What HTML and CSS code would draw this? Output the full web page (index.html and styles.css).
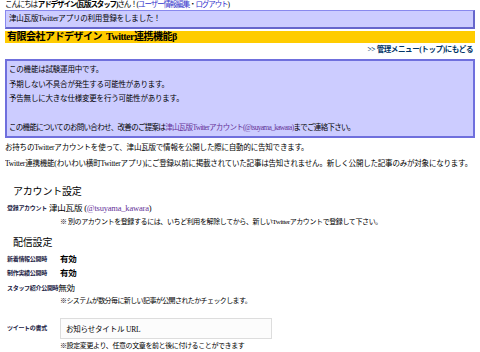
FILE: index.html
```html
<!DOCTYPE html>
<html lang="ja">
<head>
  <meta charset="UTF-8" />
  <title>Twitter連携機能</title>
  <link rel="stylesheet" href="styles.css">
</head>
<body>
  <div class="greeting">
    こんにちは <b>アドデザイン(瓦版スタッフ)</b>さん！(<a href="#">ユーザー情報編集</a>・<a href="#">ログアウト</a>)
  </div>

  <div class="flash">津山瓦版Twitterアプリの利用登録をしました！</div>

  <h1 class="title-bar">有限会社アドデザイン&nbsp; Twitter連携機能β</h1>

  <div class="back-link"><a href="#">&gt;&gt; 管理メニュー(トップ)にもどる</a></div>

  <!-- お知らせ -->
  <div class="notice">
    <p>この機能は試験運用中です。</p>
    <p>予期しない不具合が発生する可能性があります。</p>
    <p>予告無しに大きな仕様変更を行う可能性があります。</p>
    <p>&nbsp;</p>
    <p class="tight">この機能についてのお問い合わせ、改善のご提案は<a href="#" class="visited">津山瓦版Twitterアカウント(@tsuyama_kawara)</a>までご連絡下さい。</p>
  </div>

  <div class="intro">
    <p>お持ちのTwitterアカウントを使って、津山瓦版で情報を公開した際に自動的に告知できます。</p>
    <p>Twitter連携機能(わいわい横町Twitterアプリ)にご登録以前に掲載されていた記事は告知されません。新しく公開した記事のみが対象になります。</p>
  </div>

  <!-- アカウント設定 -->
  <h2>アカウント設定</h2>
  <div class="row">
    <span class="label account">登録アカウント</span>
    <span class="value">津山瓦版 (<a href="#" class="visited">@tsuyama_kawara</a>)</span>
  </div>
  <p class="note">※ 別のアカウントを登録するには、いちど利用を解除してから、新しいTwitterアカウントで登録して下さい。</p>

  <!-- 配信設定 -->
  <h2>配信設定</h2>
  <div class="row">
    <span class="label wide">新着情報公開時</span>
    <span class="value strong">有効</span>
  </div>
  <div class="row">
    <span class="label wide">制作実績公開時</span>
    <span class="value strong">有効</span>
  </div>
  <div class="row">
    <span class="label">スタッフ紹介公開時</span>
    <span class="value">無効</span>
  </div>
  <p class="note short">※システムが数分毎に新しい記事が公開されたかチェックします。</p>

  <div class="row format-row">
    <span class="label format">ツイートの書式</span>
    <input type="text" class="format-input" value="お知らせタイトル URL" />
  </div>
  <p class="note">※設定変更より、任意の文章を前と後に付けることができます</p>
</body>
</html>
```

FILE: styles.css
```css
body {
  font-family: 'Liberation Serif', 'Noto Sans CJK JP', sans-serif;
  font-size: 7.5px;
  letter-spacing: -0.2px;
  color: #000;
  background: #fff;
  margin: 0 5px;
}

a {
  color: #3333cc;
  text-decoration: none;
}

a.visited {
  color: #663399;
}

p {
  margin: 0;
}

.greeting {
  line-height: 10px;
  height: 10px;
  letter-spacing: -1.1px;
}

.flash {
  background: #ccccff;
  border: 1px solid #8888ee;
  border-right: 2px solid #6666cc;
  border-bottom: 2px solid #6666cc;
  padding: 3px 3px;
  line-height: 10px;
}

.title-bar {
  background: #ffcc00;
  font-size: 10px;
  letter-spacing: -0.5px;
  line-height: 12px;
  margin: 2px 0 0;
  padding: 0 2px;
}

.back-link {
  text-align: right;
  font-weight: bold;
  letter-spacing: -0.4px;
  line-height: 13px;
  padding-right: 2px;
}

.back-link a {
  color: #003366;
}

.notice {
  background: #ccccff;
  border: 2px solid #6f6fdd;
  padding: 2px 2px 0;
  margin-top: 3px;
  line-height: 14.5px;
}

.notice .tight {
  letter-spacing: -0.7px;
}

.intro {
  margin-top: 2px;
  line-height: 16px;
}

h2 {
  font-size: 10px;
  font-weight: normal;
  margin: 6px 0 3px 8px;
  line-height: 13px;
}

.intro + h2 {
  margin-top: 13px;
}

.row {
  display: flex;
  align-items: center;
  padding-left: 2px;
  height: 14.5px;
  line-height: 14.5px;
}

.label {
  font-size: 6px;
  font-weight: bold;
  letter-spacing: -0.3px;
  color: #222244;
}

.label.account {
  width: 42px;
}

.label.wide {
  width: 53px;
}

.value {
  font-size: 8.5px;
}

.value.strong {
  font-weight: bold;
}

.note {
  padding-left: 55px;
  font-size: 7px;
  letter-spacing: -0.4px;
  height: 14.5px;
  line-height: 14.5px;
}

.note.short {
  height: 13px;
  line-height: 13px;
  letter-spacing: -0.6px;
}

.format-row {
  height: 21px;
  margin-top: 10px;
}

.label.format {
  width: 53px;
}

.format-input {
  width: 212px;
  height: 21px;
  box-sizing: border-box;
  border: 1px solid #dddddd;
  background: #fcfcfc;
  font-family: inherit;
  font-size: 7.5px;
  letter-spacing: -0.2px;
  padding: 0 5px;
}
```
